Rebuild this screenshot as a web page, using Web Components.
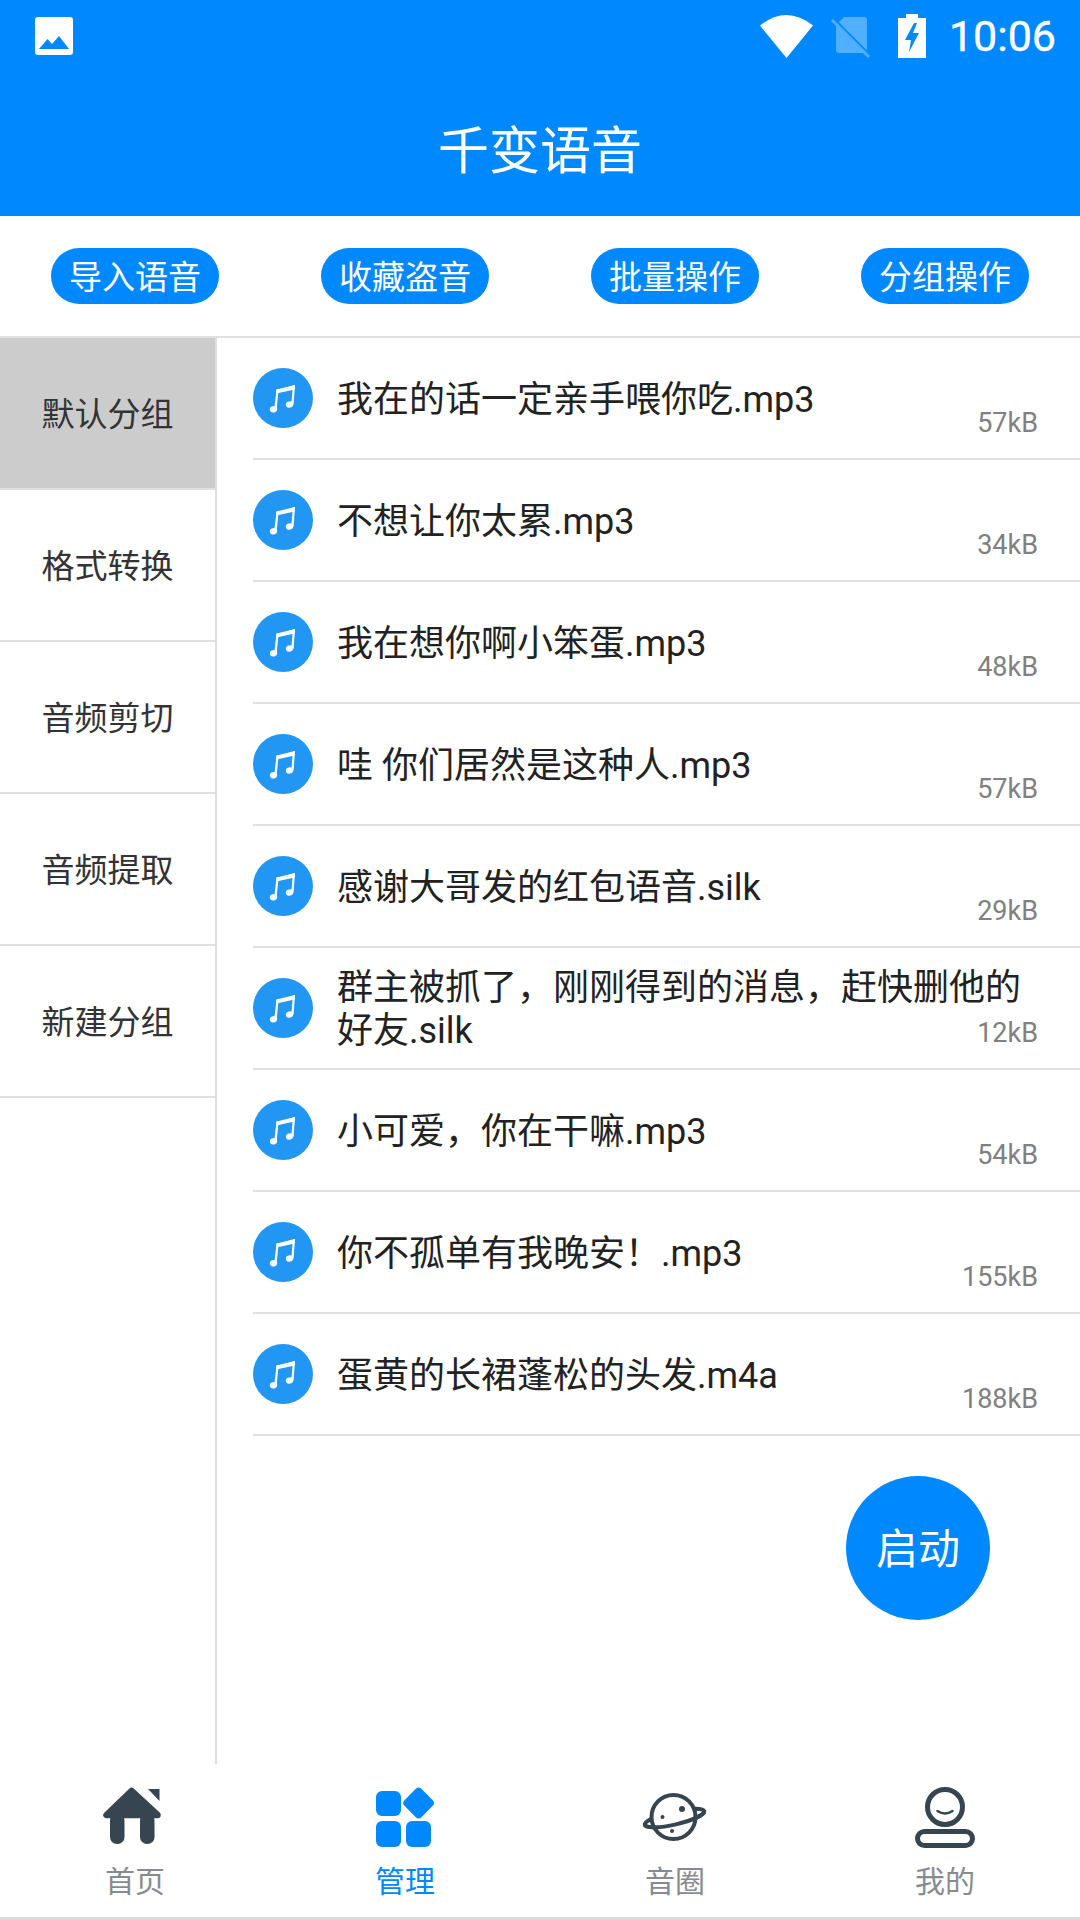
<!DOCTYPE html>
<html lang="zh-CN">

<head>
  <meta charset="UTF-8">
  <meta name="viewport" content="width=device-width, initial-scale=1.0">
  <title>千变语音</title>
  <style>
    html, body { margin: 0; padding: 0; background: #fff; }
    body { font-family: Roboto, "Noto Sans CJK SC", sans-serif; }
  </style>
</head>

<body>
  <voice-app>
    <status-bar slot="status" time="10:06"></status-bar>
    <title-bar slot="title">千变语音</title-bar>
    <tool-pill slot="tools">导入语音</tool-pill>
    <tool-pill slot="tools">收藏盗音</tool-pill>
    <tool-pill slot="tools">批量操作</tool-pill>
    <tool-pill slot="tools">分组操作</tool-pill>
    <side-item slot="side" selected>默认分组</side-item>
    <side-item slot="side">格式转换</side-item>
    <side-item slot="side">音频剪切</side-item>
    <side-item slot="side">音频提取</side-item>
    <side-item slot="side">新建分组</side-item>
    <voice-row size="57kB">我在的话一定亲手喂你吃.mp3</voice-row>
    <voice-row size="34kB">不想让你太累.mp3</voice-row>
    <voice-row size="48kB">我在想你啊小笨蛋.mp3</voice-row>
    <voice-row size="57kB">哇 你们居然是这种人.mp3</voice-row>
    <voice-row size="29kB">感谢大哥发的红包语音.silk</voice-row>
    <voice-row size="12kB">群主被抓了，刚刚得到的消息，赶快删他的好友.silk</voice-row>
    <voice-row size="54kB">小可爱，你在干嘛.mp3</voice-row>
    <voice-row size="155kB">你不孤单有我晚安！.mp3</voice-row>
    <voice-row size="188kB">蛋黄的长裙蓬松的头发.m4a</voice-row>
    <start-fab slot="fab">启动</start-fab>
    <tab-item slot="tabs" icon="home">首页</tab-item>
    <tab-item slot="tabs" icon="manage" active>管理</tab-item>
    <tab-item slot="tabs" icon="planet">音圈</tab-item>
    <tab-item slot="tabs" icon="me">我的</tab-item>
  </voice-app>

  <script>
    const BLUE = '#0088ff';
    const DARK = '#36454f';

    // tab bar icons, drawn to the sizes measured off the screenshot
    const TAB_ICONS = {
      home: `<svg width="64" height="60" viewBox="0 0 64 60">
        <path d="M28.500 4 3.500 28H54.500Z" fill="${DARK}" stroke="${DARK}" stroke-width="6.500" stroke-linejoin="round"/>
        <rect x="7" y="26" width="14.500" height="31" rx="7" fill="${DARK}"/>
        <rect x="37" y="26" width="14.500" height="31" rx="7" fill="${DARK}"/>
        <path d="M45 2H56.500V14Z" fill="${DARK}"/>
      </svg>`,
      manage: `<svg width="60" height="60" viewBox="0 0 60 60" fill="${BLUE}">
        <rect x="1" y="4" width="25" height="25" rx="6"/>
        <rect x="1" y="34" width="25" height="26" rx="6"/>
        <rect x="31" y="34" width="25" height="26" rx="6"/>
        <rect x="-12" y="-12" width="24" height="24" rx="4" transform="translate(43.600 16) rotate(45)"/>
      </svg>`,
      planet: `<svg width="70" height="60" viewBox="0 0 70 60" fill="none" stroke="${DARK}" stroke-width="4">
        <g transform="translate(34.500 31) rotate(-13)"><ellipse rx="30.500" ry="6.500"/></g>
        <circle cx="33.500" cy="30" r="22" fill="#fff"/>
        <g transform="translate(34.500 31) rotate(-13)"><path d="M-30.500 0A30.500 6.500 0 0 0 30.500 0"/></g>
        <g fill="${DARK}" stroke="none">
          <circle cx="42" cy="22" r="3"/>
          <circle cx="22.500" cy="30" r="2"/>
          <circle cx="32" cy="44" r="2"/>
        </g>
      </svg>`,
      me: `<svg width="60" height="62" viewBox="0 0 60 62" fill="none" stroke="${DARK}">
        <circle cx="30" cy="20" r="17.500" stroke-width="5"/>
        <path d="M22.500 24q7.500 5 15 0" stroke-width="2.500" stroke-linecap="round"/>
        <rect x="2.500" y="44.500" width="55" height="14" rx="7" stroke-width="5"/>
      </svg>`
    };

    class VoiceApp extends HTMLElement {
      constructor() {
        super();
        this.attachShadow({ mode: 'open' }).innerHTML = `
<style>
  :host { display: flex; flex-direction: column; width: 1080px; height: 1920px; overflow: hidden; background: #fff; }
  header { background: ${BLUE}; height: 216px; display: flex; flex-direction: column; flex: none; }
  .tools { flex: none; height: 120px; display: grid; grid-template-columns: repeat(4, 1fr); align-items: center; justify-items: center; border-bottom: 2px solid #e0e0e0; }
  .main { flex: 1; min-height: 0; display: flex; position: relative; }
  .side { flex: none; width: 215px; border-right: 2px solid #dedede; }
  .list { flex: 1; min-width: 0; padding-left: 36px; }
  .fab { position: absolute; left: 846px; top: 1138px; }
  nav { flex: none; height: 153px; display: grid; grid-template-columns: repeat(4, 1fr); border-bottom: 3px solid #dcdcdc; }
</style>
<header><slot name="status"></slot><slot name="title"></slot></header>
<div class="tools"><slot name="tools"></slot></div>
<div class="main">
  <div class="side"><slot name="side"></slot></div>
  <div class="list"><slot></slot></div>
  <div class="fab"><slot name="fab"></slot></div>
</div>
<nav><slot name="tabs"></slot></nav>`;
      }
    }
    customElements.define('voice-app', VoiceApp);

    class StatusBar extends HTMLElement {
      constructor() {
        super();
        const time = this.getAttribute('time');
        this.attachShadow({ mode: 'open' }).innerHTML = `
<style>
  :host { display: flex; align-items: center; height: 72px; flex: none; padding: 0 24px 0 35px; color: #fff; }
  .right { margin-left: auto; display: flex; align-items: center; }
  svg { display: block; overflow: visible; }
  .time { font: 400 43px/72px Roboto, sans-serif; margin-left: 23px; -webkit-text-stroke: .4px #fff; }
</style>
<svg width="38" height="38" viewBox="0 0 38 38">
  <rect width="38" height="38" rx="3" fill="#fff"/>
  <path d="M4 32 12.500 22 17 27 24 19 34 32Z" fill="${BLUE}"/>
</svg>
<div class="right">
  <svg width="53" height="43" viewBox="0 0 53 43"><path d="M26.500 43 0 10.500Q26.500-10.500 53 10.500Z" fill="#fff"/></svg>
  <svg width="39" height="41" viewBox="0 0 39 41" style="margin-left:19px">
    <g opacity=".32" fill="#fff">
      <path d="M4 8 33 37H7a3 3 0 0 1-3-3Z"/>
      <path d="M12 1H32a3 3 0 0 1 3 3V34.500L6.800 6.300Z"/>
      <path d="M0 4 37 41" stroke="#fff" stroke-width="3"/>
    </g>
  </svg>
  <svg width="28" height="44" viewBox="0 0 28 44" style="margin-left:27px">
    <path d="M8 0H20V4H28V44H0V4H8Z" fill="#fff"/>
    <path d="M16 9 7 26H13L11 38 21 19H15L19 9Z" fill="${BLUE}"/>
  </svg>
  <span class="time">${time}</span>
</div>`;
      }
    }
    customElements.define('status-bar', StatusBar);

    class TitleBar extends HTMLElement {
      constructor() {
        super();
        this.attachShadow({ mode: 'open' }).innerHTML = `
<style>
  :host { display: block; height: 144px; text-align: center; color: #fff; font-size: 51px; line-height: 160px; }
</style>
<slot></slot>`;
      }
    }
    customElements.define('title-bar', TitleBar);

    class ToolPill extends HTMLElement {
      constructor() {
        super();
        this.attachShadow({ mode: 'open' }).innerHTML = `
<style>
  :host { display: block; width: 168px; height: 56px; border-radius: 28px; background: ${BLUE}; color: #fff; font-size: 33px; line-height: 60px; text-align: center; }
</style>
<slot></slot>`;
      }
    }
    customElements.define('tool-pill', ToolPill);

    class SideItem extends HTMLElement {
      constructor() {
        super();
        this.attachShadow({ mode: 'open' }).innerHTML = `
<style>
  :host { display: flex; align-items: center; justify-content: center; box-sizing: border-box; height: 152px; padding-bottom: 2px; border-bottom: 2px solid #dedede; color: #333; font-size: 33px; }
  :host([selected]) { background: #cccccc; }
</style>
<slot></slot>`;
      }
    }
    customElements.define('side-item', SideItem);

    class VoiceRow extends HTMLElement {
      constructor() {
        super();
        const size = this.getAttribute('size');
        this.attachShadow({ mode: 'open' }).innerHTML = `
<style>
  :host { display: grid; grid-template-columns: 60px 1fr; column-gap: 24px; align-items: center; height: 120px; border-bottom: 2px solid #e0e0e0; padding-right: 42px; color: #222; }
  svg { display: block; }
  .title { grid-area: 1 / 2; font-size: 36px; line-height: 43px; padding: 4px 16px 0 0; }
  .size { grid-area: 1 / 2; justify-self: end; align-self: end; font-size: 27px; line-height: 30px; color: #808080; margin-bottom: 20px; }
</style>
<svg width="60" height="60" viewBox="0 0 60 60">
  <circle cx="30" cy="30" r="30" fill="#2196f3"/>
  <g fill="#fff">
    <path d="M23.500 21.500 42 17 41.600 21.500 23.300 25.500Z"/>
    <path d="M23.500 21.500 25.700 21 23.600 41.500 21.200 41.500Z"/>
    <path d="M39.800 17.500 42 17 40.600 36.500 38.300 36.500Z"/>
    <ellipse cx="20.500" cy="41.300" rx="3.700" ry="3.200" transform="rotate(-15 20.500 41.300)"/>
    <ellipse cx="36.500" cy="36.500" rx="3.700" ry="3.200" transform="rotate(-15 36.500 36.500)"/>
  </g>
</svg>
<div class="title"><slot></slot></div>
<div class="size">${size}</div>`;
      }
    }
    customElements.define('voice-row', VoiceRow);

    class StartFab extends HTMLElement {
      constructor() {
        super();
        this.attachShadow({ mode: 'open' }).innerHTML = `
<style>
  :host { display: flex; align-items: center; justify-content: center; box-sizing: border-box; width: 144px; height: 144px; padding-bottom: 5px; border-radius: 50%; background: ${BLUE}; color: #fff; font-size: 42px; }
</style>
<slot></slot>`;
      }
    }
    customElements.define('start-fab', StartFab);

    class TabItem extends HTMLElement {
      constructor() {
        super();
        const icon = TAB_ICONS[this.getAttribute('icon')];
        this.attachShadow({ mode: 'open' }).innerHTML = `
<style>
  :host { display: flex; flex-direction: column; align-items: center; padding-top: 23px; color: #868b90; font-size: 30px; }
  :host([active]) { color: ${BLUE}; }
  .icon { height: 60px; display: flex; justify-content: center; }
  svg { display: block; overflow: visible; }
  .label { margin-top: 15px; line-height: 40px; }
</style>
<div class="icon">${icon}</div>
<div class="label"><slot></slot></div>`;
      }
    }
    customElements.define('tab-item', TabItem);
  </script>
</body>

</html>
